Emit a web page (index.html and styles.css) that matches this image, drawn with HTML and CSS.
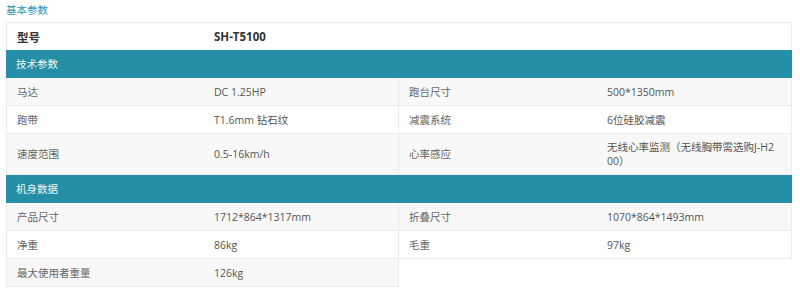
FILE: index.html
```html
<!DOCTYPE html>
<html lang="zh-CN">
<head>
<meta charset="utf-8">
<title>基本参数</title>
<link rel="stylesheet" href="styles.css">
</head>
<body>
<div class="page">
  <div class="title">基本参数</div>
  <div class="table">
    <div class="model-row">
      <div class="label">型号</div>
      <div class="value">SH-T5100</div>
    </div>
    <div class="section">技术参数</div>
    <div class="grid">
      <div class="item odd"><div class="label">马达</div><div class="value">DC 1.25HP</div></div>
      <div class="item odd"><div class="label">跑台尺寸</div><div class="value">500*1350mm</div></div>
      <div class="item"><div class="label">跑带</div><div class="value">T1.6mm 钻石纹</div></div>
      <div class="item"><div class="label">减震系统</div><div class="value">6位硅胶减震</div></div>
      <div class="item odd"><div class="label">速度范围</div><div class="value">0.5-16km/h</div></div>
      <div class="item odd"><div class="label">心率感应</div><div class="value">无线心率监测（无线胸带需选购J-H200）</div></div>
    </div>
    <div class="section">机身数据</div>
    <div class="grid">
      <div class="item odd"><div class="label">产品尺寸</div><div class="value">1712*864*1317mm</div></div>
      <div class="item odd"><div class="label">折叠尺寸</div><div class="value">1070*864*1493mm</div></div>
      <div class="item"><div class="label">净重</div><div class="value">86kg</div></div>
      <div class="item"><div class="label">毛重</div><div class="value">97kg</div></div>
      <div class="item odd"><div class="label">最大使用者重量</div><div class="value">126kg</div></div>
    </div>
  </div>
</div>
</body>
</html>
```
FILE: styles.css
```css
html, body {
  margin: 0;
  padding: 0;
  background: #ffffff;
}
.page {
  padding: 0 8px 0 6px;
  font-family: "Open Sans", "Noto Sans CJK SC", sans-serif;
  font-size: 10.5px;
  color: #555;
}
.title {
  height: 22px;
  line-height: 20px;
  color: #2f93b4;
}
.table {
  border-top: 1px solid #ececec;
}
.model-row {
  display: flex;
  height: 27px;
  align-items: center;
  border-left: 1px solid #ececec;
  border-right: 1px solid #ececec;
  color: #333;
  font-weight: bold;
  font-size: 11.5px;
}
.model-row .label,
.item .label {
  width: 187px;
  padding-left: 10px;
  flex: none;
}
.model-row .value {
  padding-left: 10px;
}
.section {
  height: 28px;
  line-height: 28px;
  padding-left: 10px;
  background: #248fa5;
  color: #eef7f9;
}
.grid {
  display: grid;
  grid-template-columns: 1fr 1fr;
}
.item {
  display: flex;
  align-items: center;
  min-height: 28px;
  padding: 6px 0;
  box-sizing: border-box;
  line-height: 14px;
  border-bottom: 1px solid #ececec;
  border-right: 1px solid #ececec;
  color: #666;
}
.item:nth-child(odd) {
  border-left: 1px solid #ececec;
}
.item:nth-child(even) .label {
  width: 188px;
}
.item.odd {
  background: #f8f8f8;
}
.item .value {
  padding-left: 10px;
  padding-right: 12px;
  color: #555;
  word-break: break-all;
  min-width: 0;
  flex: 1;
}
```
